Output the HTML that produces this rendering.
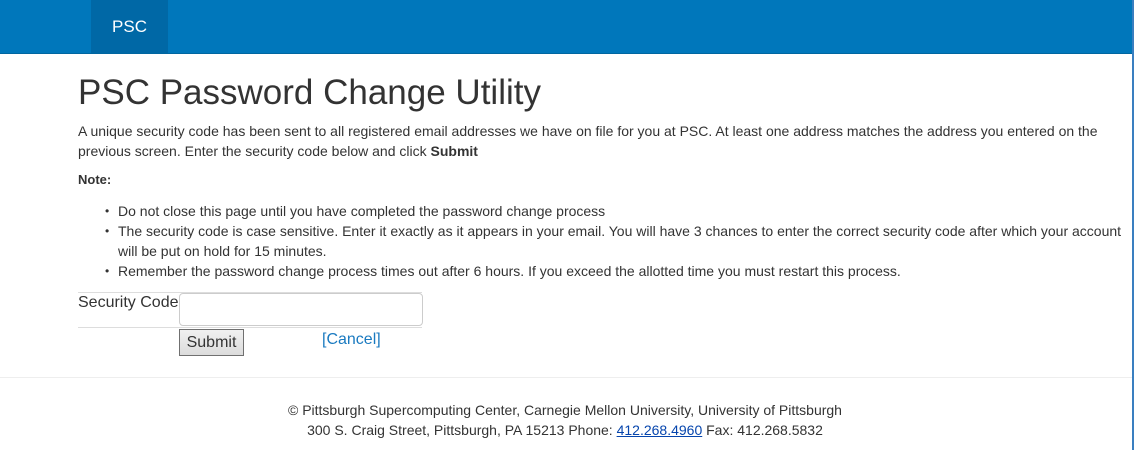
<!DOCTYPE html>
<html><head><style>
body{margin:0;font-family:"Liberation Sans",sans-serif;font-size:14px;color:#333;background:#fff;width:1134px;height:450px;overflow:hidden;position:relative}
.nav{position:absolute;left:0;top:0;width:1132px;height:53px;background:#0077bb;border-bottom:1px solid #0066a0}
.brand{position:absolute;left:91px;top:0;width:77px;height:53px;background:#0068a6;color:#fff;font-size:17px;line-height:53px;text-align:center}
.edge{position:absolute;right:0;top:0;width:2px;height:450px;background:#3a7fc0}
h1{position:absolute;left:78px;top:73px;margin:0;font-size:35px;font-weight:normal;color:#333}
.p{position:absolute;left:78px;top:121px;width:1040px;line-height:20px}
.note{position:absolute;left:78px;top:172px;font-weight:bold;font-size:13px}
ul{position:absolute;left:78px;top:201px;margin:0;padding-left:40px;width:1010px;line-height:20px;font-size:14px}
ul li{list-style:none;position:relative}
ul li:before{content:"•";position:absolute;left:-13px;top:0;font-size:12px;line-height:20px}
.l1{position:absolute;left:78px;top:292px;width:344px;border-top:1px solid #ddd}
.l2{position:absolute;left:78px;top:327px;width:344px;border-top:1px solid #ddd}
.lab{position:absolute;left:78px;top:294px;font-size:16px}
.inp{position:absolute;left:179px;top:293px;width:244px;height:33px;border:1px solid #ccc;border-radius:4px;box-sizing:border-box}
.btn{position:absolute;left:179px;top:329px;width:65px;height:27px;border:1px solid #707070;background:linear-gradient(#f0f0f0,#dcdcdc);box-sizing:border-box;font-size:16px;text-align:center;line-height:25px}
.cancel{position:absolute;left:322px;top:331px;font-size:16px;color:#1a7ac0}
.hr{position:absolute;left:0;top:377px;width:1132px;border-top:1px solid #eee}
.foot{position:absolute;left:0;width:1130px;text-align:center;top:400px;line-height:20px;font-size:14px}
.foot a{color:#0645ad;text-decoration:underline}
</style></head><body>
<div class="nav"><div class="brand">PSC</div></div>
<div class="edge"></div>
<h1>PSC Password Change Utility</h1>
<div class="p">A unique security code has been sent to all registered email addresses we have on file for you at PSC. At least one address matches the address you entered on the previous screen. Enter the security code below and click <b>Submit</b></div>
<div class="note">Note:</div>
<ul>
<li>Do not close this page until you have completed the password change process</li>
<li>The security code is case sensitive. Enter it exactly as it appears in your email. You will have 3 chances to enter the correct security code after which your account will be put on hold for 15 minutes.</li>
<li>Remember the password change process times out after 6 hours. If you exceed the allotted time you must restart this process.</li>
</ul>
<div class="l1"></div><div class="l2"></div>
<div class="lab">Security Code</div>
<div class="inp"></div>
<div class="btn">Submit</div>
<div class="cancel">[Cancel]</div>
<div class="hr"></div>
<div class="foot">© Pittsburgh Supercomputing Center, Carnegie Mellon University, University of Pittsburgh<br>300 S. Craig Street, Pittsburgh, PA 15213 Phone: <a>412.268.4960</a> Fax: 412.268.5832</div>
</body></html>
